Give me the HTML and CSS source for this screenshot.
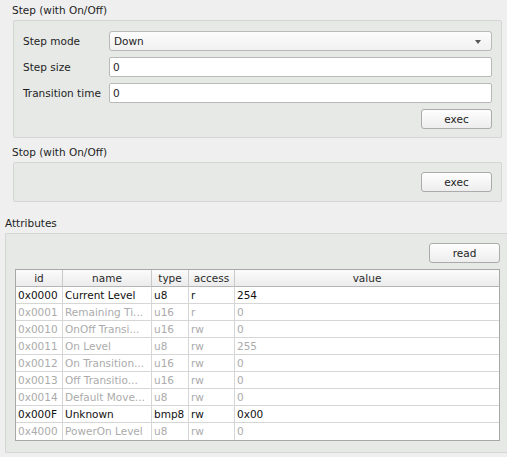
FILE: index.html
```html
<!DOCTYPE html>
<html>
<head>
<meta charset="utf-8">
<link rel="stylesheet" href="styles.css">
</head>
<body>
<div class="page">
  <div class="commands">
    <div class="title">Step (with On/Off)</div>
    <div class="group group-step">
      <div class="form">
        <div class="label">Step mode</div>
        <div class="combo"><span>Down</span><span class="arrow"></span></div>
        <div class="label">Step size</div>
        <div class="input">0</div>
        <div class="label">Transition time</div>
        <div class="input">0</div>
      </div>
      <div class="btn-row"><div class="btn">exec</div></div>
    </div>
    <div class="title title-stop">Stop (with On/Off)</div>
    <div class="group group-stop">
      <div class="btn-row"><div class="btn">exec</div></div>
    </div>
  </div>
  <div class="title title-attr">Attributes</div>
  <div class="group group-attr">
    <div class="btn-row attr-row"><div class="btn">read</div></div>
    <div class="table">
      <div class="hd">id</div><div class="hd">name</div><div class="hd">type</div><div class="hd">access</div><div class="hd last">value</div>

      <div class="c">0x0000</div><div class="c">Current Level</div><div class="c">u8</div><div class="c">r</div><div class="c last">254</div>
      <div class="c g">0x0001</div><div class="c g">Remaining Ti...</div><div class="c g">u16</div><div class="c g">r</div><div class="c g last">0</div>
      <div class="c g">0x0010</div><div class="c g">OnOff Transi...</div><div class="c g">u16</div><div class="c g">rw</div><div class="c g last">0</div>
      <div class="c g">0x0011</div><div class="c g">On Level</div><div class="c g">u8</div><div class="c g">rw</div><div class="c g last">255</div>
      <div class="c g">0x0012</div><div class="c g">On Transition...</div><div class="c g">u16</div><div class="c g">rw</div><div class="c g last">0</div>
      <div class="c g">0x0013</div><div class="c g">Off Transitio...</div><div class="c g">u16</div><div class="c g">rw</div><div class="c g last">0</div>
      <div class="c g">0x0014</div><div class="c g">Default Move...</div><div class="c g">u8</div><div class="c g">rw</div><div class="c g last">0</div>
      <div class="c">0x000F</div><div class="c">Unknown</div><div class="c">bmp8</div><div class="c">rw</div><div class="c last">0x00</div>
      <div class="c g bottom">0x4000</div><div class="c g bottom">PowerOn Level</div><div class="c g bottom">u8</div><div class="c g bottom">rw</div><div class="c g last bottom">0</div>
    </div>
  </div>
</div>
</body>
</html>
```

FILE: styles.css
```css
* { box-sizing: border-box; }
html, body {
  margin: 0;
  padding: 0;
  background: #efefef;
  overflow: hidden;
}
body {
  width: 507px;
  height: 457px;
  font-family: "DejaVu Sans", sans-serif;
  font-size: 10.5px;
  color: #1e1e1e;
}
.page {
  display: flex;
  flex-direction: column;
  padding-left: 5px;
  width: 512px;
}
.commands {
  display: flex;
  flex-direction: column;
  padding-left: 8px;
  width: 497px;
}
.title {
  height: 20px;
  line-height: 20px;
  margin-left: -1px;
}
.title-stop {
  margin-top: 4px;
}
.title-attr {
  margin-top: 12px;
  height: 19px;
  line-height: 19px;
  margin-left: 0;
}
.group {
  background: #e6e9e6;
  border: 1px solid #d3d6d3;
  border-radius: 2px;
}
.group-step {
  height: 118px;
  padding: 10px 9px 0 9px;
  display: flex;
  flex-direction: column;
  gap: 6px;
}
.form {
  display: grid;
  grid-template-columns: 86px 1fr;
  row-gap: 6px;
  align-items: center;
}
.label {
  height: 20px;
  line-height: 20px;
}
.combo {
  height: 20px;
  border: 1px solid #b9b9b9;
  border-radius: 3px;
  background: linear-gradient(#fcfcfc, #f1f1f1);
  display: flex;
  align-items: center;
  justify-content: space-between;
  padding: 0 10px 0 4px;
}
.arrow {
  width: 0;
  height: 0;
  border-left: 3.5px solid transparent;
  border-right: 3.5px solid transparent;
  border-top: 4px solid #555;
  margin-top: 1px;
}
.input {
  height: 20px;
  border: 1px solid #b9b9b9;
  border-radius: 2px;
  background: #ffffff;
  line-height: 18px;
  padding-left: 3px;
}
.btn-row {
  display: flex;
  justify-content: flex-end;
}
.attr-row {
  width: 485px;
}
.btn {
  width: 71px;
  height: 20px;
  border: 1px solid #ababab;
  border-radius: 3px;
  background: linear-gradient(#fefefe, #ededed);
  text-align: center;
  line-height: 18px;
  color: #222;
}
.group-stop {
  height: 40px;
  padding: 9px 9px 0 9px;
}
.group-attr {
  height: 220px;
  width: 505px;
  padding: 9px 9px 0 9px;
  border-right: none;
}
.table {
  margin-top: 6px;
  width: 485px;
  border: 1px solid #a8a8a8;
  background: #fff;
  display: grid;
  grid-template-columns: 47px 89px 37px 46px 264px;
  grid-auto-rows: 17px;
}
.hd {
  background: linear-gradient(#fbfbfb, #ececec);
  border-right: 1px solid #c9c9c9;
  border-bottom: 1px solid #b5b5b5;
  text-align: center;
  line-height: 16px;
  color: #2a2a2a;
}
.c {
  border-right: 1px solid #d6d6d6;
  border-bottom: 1px solid #d6d6d6;
  line-height: 16px;
  padding-left: 2px;
  white-space: nowrap;
  overflow: hidden;
  color: #111;
}
.c.g {
  color: #ababab;
}
.last {
  border-right: none;
}
.bottom {
  border-bottom: none;
}
```
